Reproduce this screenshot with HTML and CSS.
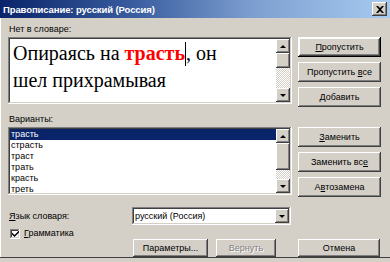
FILE: index.html
```html
<!DOCTYPE html>
<html lang="ru">
<head>
<meta charset="utf-8">
<title>Правописание</title>
<link rel="stylesheet" href="styles.css">
</head>
<body>
<div class="window">
  <div class="titlebar">
    <span class="title">Правописание: русский (Россия)</span>
    <span class="close">
      <svg width="8" height="7" viewBox="0 0 8 7"><path d="M0 0h2l2 2 2-2h2L5 3.5 8 7H6L4 5 2 7H0l3-3.5z" fill="#000"/></svg>
    </span>
  </div>
  <div class="body">
    <div class="section">
      <div class="leftcol">
        <div class="label">Нет в словаре:</div>
        <div class="field textbox">
          <div class="bigtext">Опираясь на <b class="err">трасть</b><span class="caret"></span>, он<br>шел прихрамывая</div>
          <div class="scrollbar">
            <div class="sbtn"><i class="up"></i></div>
            <div class="thumb"></div>
            <div class="track"></div>
            <div class="sbtn"><i class="down"></i></div>
          </div>
        </div>
      </div>
      <div class="buttons">
        <div class="btn default"><span><u>П</u>ропустить</span></div>
        <div class="btn"><span>Пропустить <u>в</u>се</span></div>
        <div class="btn"><span><u>Д</u>обавить</span></div>
      </div>
    </div>
    <div class="section second">
      <div class="leftcol">
        <div class="label">Варианты:</div>
        <div class="field listbox">
          <ul class="items">
            <li class="sel">трасть</li>
            <li>страсть</li>
            <li>траст</li>
            <li>трать</li>
            <li>красть</li>
            <li>треть</li>
          </ul>
          <div class="scrollbar">
            <div class="sbtn"><i class="up"></i></div>
            <div class="thumb tall"></div>
            <div class="track"></div>
            <div class="sbtn"><i class="down"></i></div>
          </div>
        </div>
      </div>
      <div class="buttons">
        <div class="btn"><span><u>З</u>аменить</span></div>
        <div class="btn"><span>Заменить вс<u>е</u></span></div>
        <div class="btn"><span>А<u>в</u>тозамена</span></div>
      </div>
    </div>
    <div class="langrow">
      <div class="langlabel"><u>Я</u>зык словаря:</div>
      <div class="field select">
        <span class="seltext">русский (Россия)</span>
        <div class="sbtn drop"><i class="down"></i></div>
      </div>
    </div>
    <div class="bottomrow">
      <div class="check">
        <span class="box">
          <svg width="7" height="7" viewBox="0 0 7 7"><path d="M0 2.5l2.5 2.5L7 0.5V2.5L2.5 7 0 4.5z" fill="#000"/></svg>
        </span>
        <span><u>Г</u>рамматика</span>
      </div>
      <div class="btn param"><span>Параметры...</span></div>
      <div class="btn undo disabled"><span>Вернуть</span></div>
      <div class="btn cancel"><span>Отмена</span></div>
    </div>
  </div>
</div>
</body>
</html>
```
FILE: styles.css
```css
* { box-sizing: border-box; }
html, body { margin: 0; padding: 0; }
body {
  width: 390px;
  height: 262px;
  overflow: hidden;
  background: #d4d0c8;
  font-family: "Liberation Sans", Arial, sans-serif;
  font-size: 9px;
  color: #000;
}
u { text-decoration: underline; text-underline-offset: 1px; }
.window {
  width: 390px;
  height: 258px;
  background: #d4d0c8;
  border-bottom: 1px solid #404040;
  box-shadow: inset 1px 0 #fff;
}
.titlebar {
  height: 18px;
  background: linear-gradient(90deg, #0a246a 0%, #3a5ea0 35%, #7d9fd0 65%, #a6caf0 100%);
  display: flex;
  align-items: center;
  justify-content: space-between;
  padding: 0 3px 0 3px;
}
.title {
  color: #fff;
  font-weight: bold;
  font-size: 9.5px;
  letter-spacing: -0.1px;
}
.close {
  width: 15px;
  height: 14px;
  background: #d4d0c8;
  box-shadow: inset -1px -1px #404040, inset 1px 1px #fff, inset -2px -2px #808080;
  display: flex;
  align-items: center;
  justify-content: center;
}
.body {
  padding: 6px 0 0 8px;
}
.section {
  display: flex;
  gap: 6px;
}
.section.second { margin-top: 7px; }
.leftcol { width: 284px; }
.label {
  height: 13px;
  line-height: 11px;
  padding-left: 1px;
}
.field {
  background: #fff;
  box-shadow: inset -1px -1px #fff, inset 1px 1px #808080, inset -2px -2px #d4d0c8, inset 2px 2px #404040;
  padding: 2px;
  display: flex;
}
.textbox { height: 67px; }
.bigtext {
  flex: 1;
  font-family: "Liberation Serif", Tinos, "Times New Roman", Times, "DejaVu Serif", "Noto Serif", FreeSerif, serif;
  font-size: 20px;
  line-height: 27px;
  padding: 1px 0 0 3px;
  white-space: nowrap;
  overflow: hidden;
}
.err { color: #ff0000; }
.caret {
  display: inline-block;
  width: 1px;
  height: 24px;
  background: #000;
  vertical-align: -6px;
}
.scrollbar {
  width: 14px;
  flex: none;
  display: flex;
  flex-direction: column;
  background: repeating-conic-gradient(#fff 0 25%, #d4d0c8 0 50%) 0 0 / 2px 2px;
}
.sbtn {
  width: 14px;
  height: 14px;
  flex: none;
  background: #d4d0c8;
  box-shadow: inset -1px -1px #404040, inset 1px 1px #fff, inset -2px -2px #808080;
  display: flex;
  align-items: center;
  justify-content: center;
}
.thumb {
  height: 15px;
  flex: none;
  background: #d4d0c8;
  box-shadow: inset -1px -1px #404040, inset 1px 1px #fff, inset -2px -2px #808080;
}
.thumb.tall { height: 27px; }
.track { flex: 1; }
.up, .down {
  display: block;
  width: 0;
  height: 0;
  border-left: 3px solid transparent;
  border-right: 3px solid transparent;
}
.up { border-bottom: 3px solid #000; }
.down { border-top: 3px solid #000; }
.buttons {
  margin-top: 13px;
  display: flex;
  flex-direction: column;
  gap: 5px;
}
.btn {
  width: 83px;
  height: 20px;
  background: #d4d0c8;
  box-shadow: inset -1px -1px #404040, inset 1px 1px #fff, inset -2px -2px #808080;
  display: flex;
  align-items: center;
  justify-content: center;
  font-size: 9px;
  white-space: nowrap;
}
.btn.default {
  box-shadow: inset -1px -1px #000, inset 1px 1px #fff, inset -2px -2px #404040, inset 2px 2px #fff, inset -3px -3px #808080;
}
.listbox { height: 68px; }
.items {
  list-style: none;
  margin: 0;
  padding: 0;
  flex: 1;
  overflow: hidden;
  line-height: 11px;
}
.items li { padding-left: 1px; height: 11px; }
.items li.sel {
  background: #0a246a;
  color: #fff;
}
.langrow {
  margin-top: 10px;
  display: flex;
  align-items: center;
}
.langlabel { width: 124px; padding-left: 1px; }
.select {
  width: 159px;
  height: 18px;
  align-items: stretch;
  justify-content: space-between;
}
.seltext { line-height: 14px; padding-left: 1px; }
.drop { width: 14px; height: 14px; }
.bottomrow {
  margin-top: 3px;
  display: flex;
  align-items: flex-start;
}
.check {
  width: 125px;
  display: flex;
  align-items: center;
  gap: 4px;
  padding-left: 2px;
  line-height: 11px;
}
.box {
  width: 10px;
  height: 10px;
  background: #fff;
  box-shadow: inset -1px -1px #fff, inset 1px 1px #808080, inset -2px -2px #d4d0c8, inset 2px 2px #404040;
  display: flex;
  align-items: center;
  justify-content: center;
  padding-left: 1px;
}
.bottomrow .btn { margin-top: 11px; height: 18px; }
.param { width: 75px; }
.undo { width: 60px; margin-left: 8px; }
.cancel { width: 82px; margin-left: 22px; }
.disabled { color: #808080; text-shadow: 1px 1px #fff; }
```
